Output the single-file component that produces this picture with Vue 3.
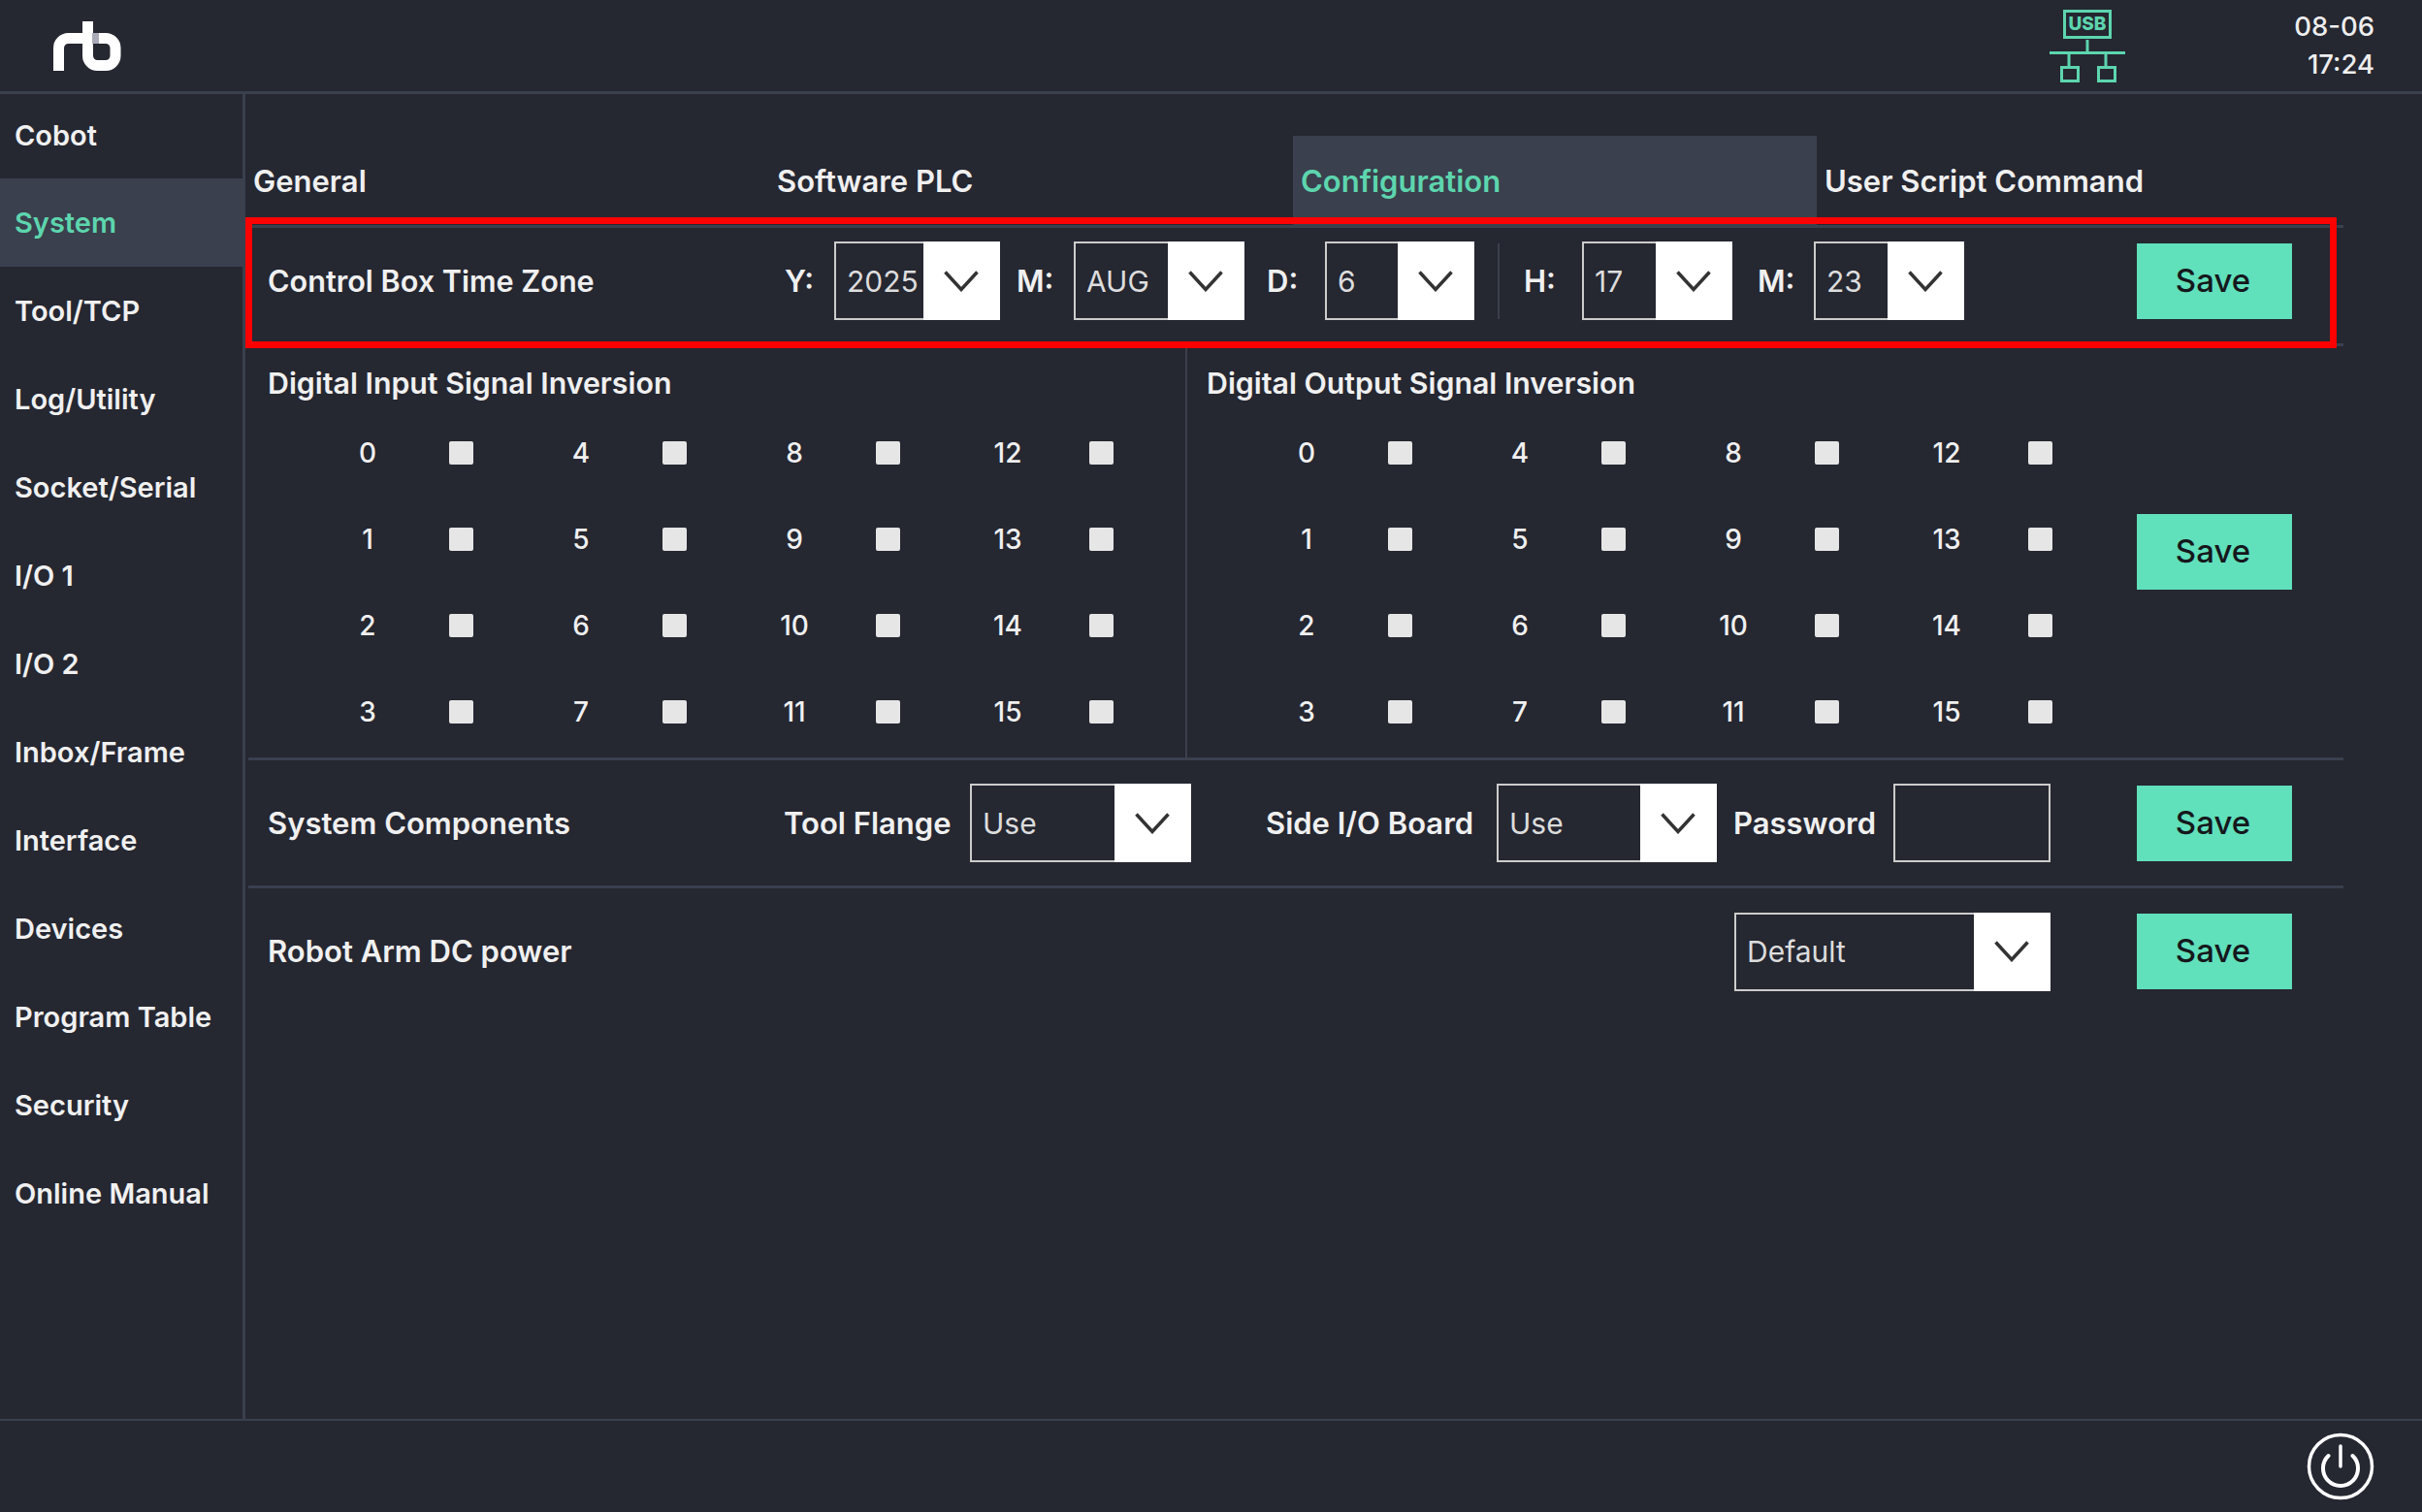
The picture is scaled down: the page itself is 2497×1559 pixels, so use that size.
<template>
  <div class="app">
    <header class="topbar">
      <svg class="logo" width="70" height="51" viewBox="0 0 70 51" fill="none" stroke="#fff" stroke-width="11">
        <path d="M5.5 51V27.5a10 10 0 0 1 10-10H38"/>
        <path d="M35.5 0V35.5a10 10 0 0 0 10 10H54a10 10 0 0 0 10-10V27.5a10 10 0 0 0-10-10H36"/>
        <rect x="40" y="12" width="7" height="11" fill="#a9abb8" stroke="none"/>
      </svg>
      <svg class="usb" width="78" height="75" viewBox="0 0 78 75" fill="none" stroke="#5dd5ae" stroke-width="3">
        <rect x="15.5" y="1.5" width="47" height="27"/>
        <text x="39" y="21" text-anchor="middle" class="usb-text">USB</text>
        <path d="M39 31V44M0 44.5H78M20 44V58M58 44V58"/>
        <rect x="12.5" y="59.5" width="17" height="14"/>
        <rect x="50.5" y="59.5" width="17" height="14"/>
      </svg>
      <div class="clock">
        <div>08-06</div>
        <div>17:24</div>
      </div>
    </header>

    <div class="body">
      <nav class="sidebar">
        <div
          v-for="item in menu"
          :key="item"
          class="nav-item"
          :class="{ active: item === 'System' }"
        >{{ item }}</div>
      </nav>

      <main class="content">
        <div class="tabs">
          <div
            v-for="tab in tabs"
            :key="tab"
            class="tab"
            :class="{ active: tab === 'Configuration' }"
          >{{ tab }}</div>
        </div>

        <!-- time zone -->
        <section class="row row-time">
          <div class="highlight"></div>
          <div class="row-title time-title">Control Box Time Zone</div>
          <template v-for="f in timeFields" :key="f.id">
            <div v-if="f.id === 'hour'" class="time-sep"></div>
            <div class="time-label" :class="'l-' + f.id">{{ f.label }}</div>
            <div class="select" :class="'s-' + f.id">
              <div class="select-value">{{ f.value }}</div>
              <div class="select-arrow">
                <svg width="36" height="22" viewBox="0 0 36 22" fill="none" stroke="#333" stroke-width="3.5">
                  <path d="M1.5 1.5L18 19.5L34.5 1.5"/>
                </svg>
              </div>
            </div>
          </template>
          <button class="save">Save</button>
        </section>

        <!-- signal inversion -->
        <section class="signals">
          <div v-for="(group, g) in signalGroups" :key="group" class="signal-col" :class="{ first: g === 0 }">
            <div class="row-title signal-title">{{ group }}</div>
            <div class="signal-grid">
              <div v-for="n in signalOrder" :key="n" class="signal">
                <span class="signal-num">{{ n }}</span>
                <span class="check"></span>
              </div>
            </div>
          </div>
          <button class="save signal-save">Save</button>
        </section>

        <!-- components -->
        <section class="row row-comp">
          <div class="row-title comp-title">System Components</div>
          <div class="row-title tool-label">Tool Flange</div>
          <div class="select s-tool">
            <div class="select-value">Use</div>
            <div class="select-arrow">
              <svg width="36" height="22" viewBox="0 0 36 22" fill="none" stroke="#333" stroke-width="3.5">
                <path d="M1.5 1.5L18 19.5L34.5 1.5"/>
              </svg>
            </div>
          </div>
          <div class="row-title side-label">Side I/O Board</div>
          <div class="select s-side">
            <div class="select-value">Use</div>
            <div class="select-arrow">
              <svg width="36" height="22" viewBox="0 0 36 22" fill="none" stroke="#333" stroke-width="3.5">
                <path d="M1.5 1.5L18 19.5L34.5 1.5"/>
              </svg>
            </div>
          </div>
          <div class="row-title pass-label">Password</div>
          <div class="password"></div>
          <button class="save">Save</button>
        </section>

        <!-- dc power -->
        <section class="row row-power">
          <div class="row-title">Robot Arm DC power</div>
          <div class="select s-power">
            <div class="select-value">Default</div>
            <div class="select-arrow">
              <svg width="36" height="22" viewBox="0 0 36 22" fill="none" stroke="#333" stroke-width="3.5">
                <path d="M1.5 1.5L18 19.5L34.5 1.5"/>
              </svg>
            </div>
          </div>
          <button class="save power-save">Save</button>
        </section>
      </main>
    </div>

    <footer class="footer">
      <svg width="70" height="70" viewBox="0 0 70 70" fill="none" stroke="#fff" stroke-width="3.5" stroke-linecap="round">
        <circle cx="35" cy="35" r="32.5"/>
        <path d="M35 14V35"/>
        <path d="M22.5 24a18 18 0 1 0 25 0" stroke-width="4"/>
      </svg>
    </footer>
  </div>
</template>

<script setup>
const menu = [
  'Cobot', 'System', 'Tool/TCP', 'Log/Utility', 'Socket/Serial', 'I/O 1', 'I/O 2',
  'Inbox/Frame', 'Interface', 'Devices', 'Program Table', 'Security', 'Online Manual'
]
const tabs = ['General', 'Software PLC', 'Configuration', 'User Script Command']
const timeFields = [
  { id: 'year', label: 'Y:', value: '2025' },
  { id: 'month', label: 'M:', value: 'AUG' },
  { id: 'day', label: 'D:', value: '6' },
  { id: 'hour', label: 'H:', value: '17' },
  { id: 'min', label: 'M:', value: '23' }
]
const signalGroups = ['Digital Input Signal Inversion', 'Digital Output Signal Inversion']
// grid fills row by row, numbers run down the columns
const signalOrder = [0, 4, 8, 12, 1, 5, 9, 13, 2, 6, 10, 14, 3, 7, 11, 15]
</script>

<style>
html, body {
  background: #252731;
}
</style>

<style scoped>
.app {
  width: 2497px;
  height: 1559px;
  display: flex;
  flex-direction: column;
  background: #252731;
  color: #f0f0f0;
  font-family: Inter, "Noto Sans", sans-serif;
  overflow: hidden;
}

.topbar {
  height: 94px;
  flex: none;
  box-sizing: content-box;
  border-bottom: 3px solid #3a404d;
  display: flex;
  align-items: center;
}
.logo {
  margin-left: 55px;
}
.usb {
  margin-left: auto;
}
.usb-text {
  font-size: 19px;
  font-weight: 800;
  fill: #5dd5ae;
  stroke: none;
}
.clock {
  width: 257px;
  margin-right: 49px;
  text-align: right;
  font-size: 27.5px;
  font-weight: 500;
  line-height: 39px;
  color: #eee;
}

.body {
  flex: 1;
  display: flex;
  min-height: 0;
}

.sidebar {
  width: 250px;
  flex: none;
  border-right: 3px solid #3a404d;
}
.nav-item {
  height: 91px;
  display: flex;
  align-items: center;
  padding-left: 15px;
  font-size: 29px;
  font-weight: 600;
  white-space: nowrap;
}
.nav-item:first-child {
  height: 85px;
  padding-bottom: 2px;
}
.nav-item.active {
  background: #3a404d;
  color: #5dd5ae;
}

.content {
  flex: 1;
  padding-top: 43px;
}
.tabs {
  display: grid;
  grid-template-columns: 540px 540px 540px 540px;
  height: 92px;
}
.tab {
  display: flex;
  align-items: center;
  padding-left: 8px;
  font-size: 31px;
  font-weight: 600;
}
.tab.active {
  background: #3a404d;
  color: #5dd5ae;
}

.row {
  width: 2160px;
  margin-left: 3px;
  box-sizing: border-box;
  padding: 0 53px 0 20px;
  display: flex;
  align-items: center;
  border-bottom: 3px solid #3a404d;
}
.row-title {
  font-size: 31px;
  font-weight: 600;
  line-height: 36px;
  white-space: nowrap;
}

.row-time {
  position: relative;
  height: 125px;
  padding-top: 14px;
  padding-bottom: 24px;
  border-top: 3px solid #3a404d;
}
.highlight {
  position: absolute;
  left: -3px;
  top: -11px;
  width: 2156px;
  height: 135px;
  box-sizing: border-box;
  border: 7px solid #f00;
  pointer-events: none;
}
.time-title {
  width: 533px;
  flex: none;
  font-size: 30.6px;
}
.time-label {
  flex: none;
  font-size: 31px;
  font-weight: 600;
}
.l-year { width: 51px; }
.l-month { width: 59px; margin-left: 17px; }
.l-day { width: 60px; margin-left: 23px; }
.l-hour { width: 60px; margin-left: 25px; }
.l-min { width: 58px; margin-left: 26px; }
.time-sep {
  width: 2px;
  height: 78px;
  margin-left: 24px;
  background: #3a404d;
}

.select {
  height: 81px;
  flex: none;
  box-sizing: border-box;
  border: 2px solid #ccc;
  display: flex;
}
.s-year { width: 171px; }
.s-month { width: 176px; }
.s-day { width: 154px; }
.s-hour { width: 155px; }
.s-min { width: 155px; }
.s-tool { width: 228px; }
.s-side { width: 227px; }
.s-power { width: 326px; margin-left: auto; }

.select-value {
  flex: 1;
  display: flex;
  align-items: center;
  padding-left: 11px;
  font-size: 30px;
  color: #ddd;
}
.select-arrow {
  width: 77px;
  padding-right: 2px;
  margin: -2px -2px -2px 0;
  background: #fff;
  display: flex;
  align-items: center;
  justify-content: center;
}

.save {
  width: 160px;
  height: 78px;
  flex: none;
  margin-left: auto;
  border: none;
  padding: 0 3px 2px 0;
  background: #60e0bb;
  color: #15181c;
  font-family: inherit;
  font-size: 33px;
  font-weight: 500;
}

.signals {
  width: 2160px;
  margin-left: 3px;
  box-sizing: border-box;
  height: 427px;
  padding-right: 53px;
  display: flex;
  border-bottom: 3px solid #3a404d;
}
.signal-col {
  flex: 1;
  padding-top: 20px;
}
.signal-col.first {
  flex: none;
  width: 968px;
  box-sizing: border-box;
  border-right: 2px solid #3a404d;
}
.signal-title {
  padding-left: 20px;
  font-size: 30.3px;
}
.signal-grid {
  display: grid;
  grid-template-columns: repeat(4, 220px);
  grid-auto-rows: 89px;
  margin-top: 9px;
  padding-left: 93px;
}
.signal {
  display: flex;
  align-items: center;
  gap: 54px;
}
.signal-num {
  width: 60px;
  text-align: center;
  font-size: 28px;
  font-weight: 500;
}
.check {
  width: 25px;
  height: 24px;
  background: #e6e6e6;
  border-radius: 2px;
}
.signal-save {
  align-self: center;
}

.row-comp {
  height: 132px;
}
.comp-title {
  width: 532px;
  flex: none;
}
.tool-label {
  width: 192px;
  flex: none;
}
.side-label {
  width: 238px;
  flex: none;
  margin-left: 77px;
}
.pass-label {
  width: 165px;
  flex: none;
  margin-left: 17px;
}
.password {
  width: 162px;
  height: 81px;
  flex: none;
  box-sizing: border-box;
  border: 2px solid #ccc;
}

.row-power {
  height: 130px;
  border-bottom: none;
}
.power-save {
  margin-left: 89px;
}

.footer {
  flex: none;
  height: 94px;
  border-top: 2px solid #3a404d;
  display: flex;
  align-items: center;
  justify-content: flex-end;
  padding-right: 49px;
}
</style>
